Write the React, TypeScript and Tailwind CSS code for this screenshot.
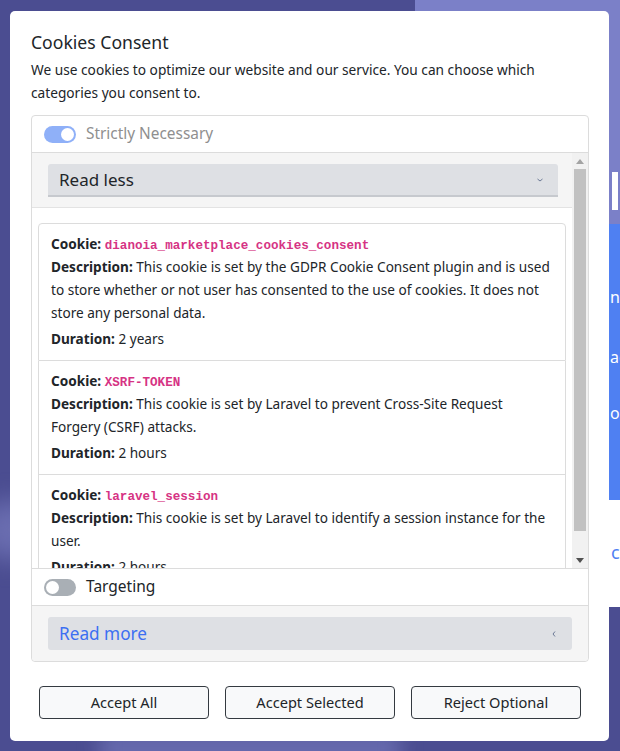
import React from "react";

const font = { fontFamily: "'Noto Sans', 'Open Sans', sans-serif" };

function Toggle({ on }: { on: boolean }) {
  return on ? (
    <div className="w-[32px] h-[17px] rounded-full bg-[#8fb0f8] flex items-center justify-end pr-[2px]">
      <div className="w-[13px] h-[13px] rounded-full bg-white" />
    </div>
  ) : (
    <div className="w-[32px] h-[17px] rounded-full bg-[#a9afb5] flex items-center justify-start pl-[2px]">
      <div className="w-[13px] h-[13px] rounded-full bg-white" />
    </div>
  );
}

function CookieCard({
  name,
  desc,
  duration,
  first,
}: {
  name: string;
  desc: string;
  duration: string;
  first?: boolean;
}) {
  return (
    <div
      className={`border border-[#dcdcdc] bg-white px-[12px] pt-[8px] pb-[10px] text-[13.6px] leading-[23px] text-[#212529] ${
        first ? "rounded-t-[4px]" : "border-t-0"
      }`}
    >
      <div className="h-[23px]">
        <b className="font-bold">Cookie:</b>{" "}
        <code
          className="font-bold text-[12.6px] leading-[1] text-[#d63384]"
          style={{ fontFamily: "'Liberation Mono', monospace" }}
        >
          {name}
        </code>
      </div>
      <div>
        <b className="font-bold">Description:</b> {desc}
      </div>
      <div className="mt-[3px]">
        <b className="font-bold">Duration:</b> {duration}
      </div>
    </div>
  );
}

export default function App() {
  return (
    <div className="relative w-[620px] h-[751px] overflow-hidden bg-[#4b4d91]" style={font}>
      {/* background page */}
      <div className="absolute left-[415px] top-0 w-[205px] h-[224px] bg-[#7b80c8]" />
      <div className="absolute left-[612px] top-[172px] w-[6px] h-[38px] bg-white" />
      <div className="absolute left-[415px] top-[224px] w-[205px] h-[276px] bg-[#4f80f2]" />
      <div className="absolute left-[610px] top-[285px] text-white text-[16px] leading-[24px]">nd</div>
      <div className="absolute left-[610px] top-[345px] text-white text-[16px] leading-[24px]">ac</div>
      <div className="absolute left-[610px] top-[401px] text-white text-[16px] leading-[24px]">or</div>
      <div className="absolute left-[415px] top-[500px] w-[205px] h-[107px] bg-white" />
      <div className="absolute left-[611px] top-[540px] text-[#4f80f2] text-[18px] leading-[24px]">c</div>
      <div className="absolute left-[-20px] top-[500px] w-[60px] h-[60px] rounded-full bg-[#6a6db0] blur-[12px]" />
      <div className="absolute left-[100px] top-[730px] w-[300px] h-[40px] bg-[#6669ad] blur-[10px]" />

      {/* modal */}
      <div className="absolute left-[10px] top-[11px] w-[599px] h-[730px] bg-white rounded-[5px] px-[21px] pt-[19px] flex flex-col">
        <h1 className="text-[17.6px] leading-[24px] text-[#212529] font-normal">Cookies Consent</h1>
        <p className="mt-[4px] text-[13.7px] leading-[23px] text-[#212529]">
          We use cookies to optimize our website and our service. You can choose which categories you consent to.
        </p>

        <div className="mt-[11px] w-[558px] border border-[#dcdcdc] rounded-[4px] flex flex-col">
          {/* Strictly necessary */}
          <div className="h-[37px] flex items-center pl-[12px] gap-[10px] border-b border-[#dcdcdc]">
            <Toggle on />
            <span className="text-[15.4px] text-[#8f8f8f]">Strictly Necessary</span>
          </div>
          <div className="h-[416px] flex border-b border-[#dcdcdc]">
            <div className="flex-1 overflow-hidden flex flex-col">
              <div className="bg-[#f5f5f5] pt-[11px] pb-[10px] pl-[16px] pr-[14px] border-b border-[#e3e3e3]">
                <div className="h-[33px] bg-[#dee0e4] border-b-2 border-[#c6c9ce] rounded-t-[3px] flex items-center justify-between pl-[11px] pr-[14px]">
                  <span className="text-[17px] text-[#212529]">Read less</span>
                  <svg width="8" height="6" viewBox="0 0 8 6" className="mt-[1px]">
                    <path d="M1.5 2 L4 4 L6.5 2" fill="none" stroke="#6c7a96" strokeWidth="1" />
                  </svg>
                </div>
              </div>
              <div className="bg-white pt-[15px] pl-[6px] pr-[6px]">
                <CookieCard
                  first
                  name="dianoia_marketplace_cookies_consent"
                  desc="This cookie is set by the GDPR Cookie Consent plugin and is used to store whether or not user has consented to the use of cookies. It does not store any personal data."
                  duration="2 years"
                />
                <CookieCard
                  name="XSRF-TOKEN"
                  desc="This cookie is set by Laravel to prevent Cross-Site Request Forgery (CSRF) attacks."
                  duration="2 hours"
                />
                <CookieCard
                  name="laravel_session"
                  desc="This cookie is set by Laravel to identify a session instance for the user."
                  duration="2 hours"
                />
              </div>
            </div>
            {/* fake scrollbar */}
            <div className="w-[16px] bg-[#f1f1f1] flex flex-col items-center">
              <div className="h-[16px] flex items-center justify-center">
                <svg width="8" height="5" viewBox="0 0 8 5">
                  <path d="M0 5 L4 0 L8 5 Z" fill="#a3a3a3" />
                </svg>
              </div>
              <div className="w-[12px] flex-1 mb-[21px] bg-[#c1c1c1]" />
              <div className="h-[16px] flex items-center justify-center">
                <svg width="8" height="5" viewBox="0 0 8 5">
                  <path d="M0 0 L8 0 L4 5 Z" fill="#505050" />
                </svg>
              </div>
            </div>
          </div>
          {/* Targeting */}
          <div className="h-[37px] flex items-center pl-[12px] gap-[10px] border-b border-[#dcdcdc]">
            <Toggle on={false} />
            <span className="text-[15.5px] text-[#212529]">Targeting</span>
          </div>
          <div className="bg-[#f5f5f5] py-[11px] px-[16px] rounded-b-[4px]">
            <div className="h-[33px] bg-[#dee0e4] rounded-[3px] flex items-center justify-between pl-[11px] pr-[15px]">
              <span className="text-[17.2px] text-[#3c6ff2]">Read more</span>
              <svg width="6" height="8" viewBox="0 0 6 8">
                <path d="M4 1.5 L2 4 L4 6.5" fill="none" stroke="#6c7a96" strokeWidth="1" />
              </svg>
            </div>
          </div>
        </div>

        <div className="mt-[24px] flex gap-[16px] pl-[8px]">
          {["Accept All", "Accept Selected", "Reject Optional"].map((t) => (
            <button
              key={t}
              className="w-[170px] h-[33px] border border-[#343a40] rounded-[4px] bg-[#f8f9fa] text-[14.6px] text-[#212529]"
            >
              {t}
            </button>
          ))}
        </div>
      </div>
    </div>
  );
}
